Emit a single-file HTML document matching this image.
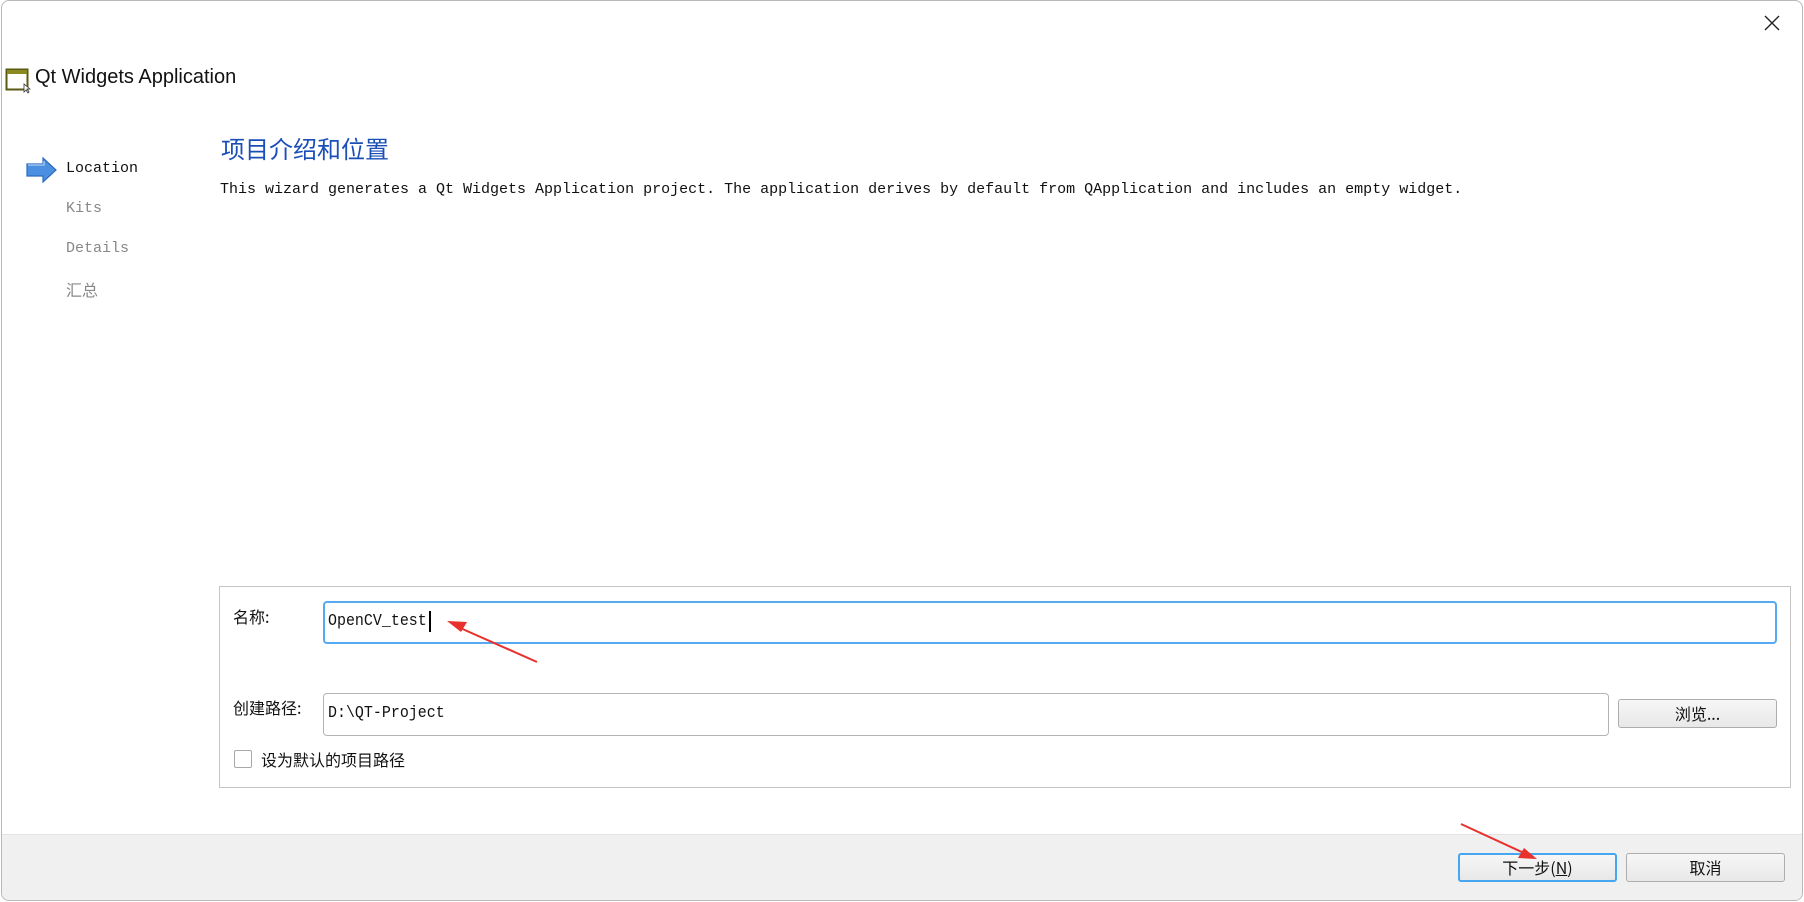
<!DOCTYPE html>
<html><head><meta charset="utf-8"><style>
*{margin:0;padding:0;box-sizing:border-box}
body{width:1804px;height:902px;background:#fff;position:relative;overflow:hidden;font-family:"Liberation Sans","Noto Sans CJK SC",sans-serif}
.win{position:absolute;left:1px;top:0;width:1802px;height:901px;border:1px solid #b8b8b8;border-radius:8px;background:#fff;overflow:hidden}
.abs{position:absolute;white-space:nowrap}
.mono{font-family:"Liberation Mono","Noto Sans CJK SC",monospace}
.cjk{font-family:"Noto Sans CJK SC","WenQuanYi Zen Hei",sans-serif}
.footer{position:absolute;left:0;top:833px;width:100%;height:70px;background:#f0f0f0;border-top:1px solid #e2e2e2}
.btn{position:absolute;height:29px;border:1px solid #adadad;border-radius:3px;background:linear-gradient(#f6f6f6,#e8e8e8);font-size:16px;text-align:center;line-height:26px;color:#111}
.inp{position:absolute;left:326px;font-family:"Liberation Mono",monospace;font-size:17px;color:#111;transform:scaleX(0.88);transform-origin:left;white-space:nowrap}
</style></head><body>
<div class="win">
<svg class="abs" style="left:1760px;top:12px" width="20" height="20"><path d="M3 3L17 17M17 3L3 17" stroke="#222" stroke-width="1.4"/></svg>
<svg class="abs" style="left:3px;top:67px" width="26" height="26"><rect x="1.5" y="1.5" width="21" height="20" fill="#fff" stroke="#5a5a10" stroke-width="2"/><rect x="2" y="2" width="20" height="4" fill="#8a8a20"/><path d="M19 16l0 8 2-2 2 3 1-1-2-3 3 0z" fill="#fff" stroke="#333" stroke-width="0.8"/></svg>
<div class="abs" style="left:33px;top:65px;font-size:20px;color:#111">Qt Widgets Application</div>
<svg class="abs" style="left:23px;top:154px" width="34" height="30"><path d="M2 9h16V3l13 12-13 12v-6H2z" fill="#4a8fe0" stroke="#2e6bc0" stroke-width="1.2"/><path d="M3 10h16V6" fill="none" stroke="#9cc4f4" stroke-width="1.5"/></svg>
<div class="abs mono" style="left:64px;top:159px;font-size:15px;color:#111">Location</div>
<div class="abs mono" style="left:64px;top:199px;font-size:15px;color:#888">Kits</div>
<div class="abs mono" style="left:64px;top:239px;font-size:15px;color:#888">Details</div>
<div class="abs cjk" style="left:64px;top:276px;font-size:16px;color:#888">汇总</div>
<div class="abs cjk" style="left:219px;top:129px;font-size:24px;color:#1a4fb8">项目介绍和位置</div>
<div class="abs mono" style="left:218px;top:180px;font-size:15px;color:#111">This wizard generates a Qt Widgets Application project. The application derives by default from QApplication and includes an empty widget.</div>
<div class="abs" style="left:217px;top:585px;width:1572px;height:202px;border:1px solid #c4c4c4"></div>
<div class="abs cjk" style="left:231px;top:603px;font-size:16px;color:#111">名称:</div>
<div class="abs" style="left:321px;top:600px;width:1454px;height:43px;border:2px solid #55aaf2;border-radius:4px"></div>
<div class="inp" style="top:611px">OpenCV_test</div>
<div class="abs" style="left:427px;top:610px;width:2px;height:21px;background:#000"></div>
<div class="abs cjk" style="left:231px;top:694px;font-size:16px;color:#111">创建路径:</div>
<div class="abs" style="left:321px;top:692px;width:1286px;height:43px;border:1px solid #b4b4b4;border-radius:4px"></div>
<div class="inp" style="top:703px">D:\QT-Project</div>
<div class="btn cjk" style="left:1616px;top:698px;width:159px">浏览...</div>
<div class="abs" style="left:232px;top:749px;width:18px;height:18px;border:1px solid #a8a8a8;background:#fff;border-radius:2px"></div>
<div class="abs cjk" style="left:259px;top:746px;font-size:16px;color:#111">设为默认的项目路径</div>
<div class="footer"></div>
<div class="btn cjk" style="left:1456px;top:852px;width:159px;border-color:#46a6f0;border-width:2px;line-height:25px">下一步(<u>N</u>)</div>
<div class="btn cjk" style="left:1624px;top:852px;width:159px">取消</div>
<svg class="abs" style="left:0;top:0" width="1804" height="902"><path d="M535 661L456 626" stroke="#e8302c" stroke-width="2"/><path d="M445 620l20 1-6 10z" fill="#e8302c"/><path d="M1459 823L1524 853" stroke="#e8302c" stroke-width="2"/><path d="M1535 858l-19 -1 6-10z" fill="#e8302c"/></svg>
</div>
</body></html>
